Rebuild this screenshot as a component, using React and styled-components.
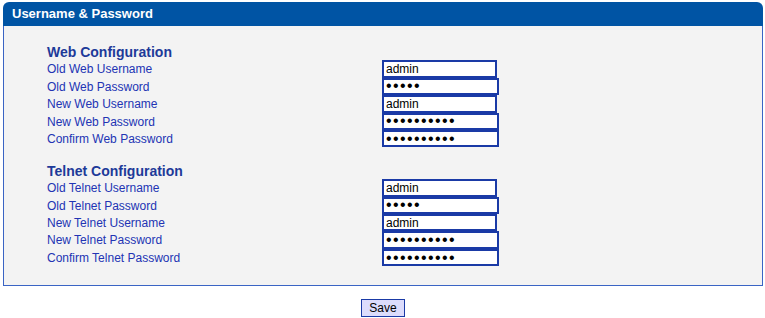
import React from 'react';
import styled, { createGlobalStyle } from 'styled-components';

const GlobalStyle = createGlobalStyle`
    body {
        margin: 0;
        background: #fff;
        font-family: "Liberation Sans", Arial, sans-serif;
    }
`;

const Page = styled.div`
    padding: 2px 2px 0 3px;
    width: 760px;
`;

const Header = styled.div`
    height: 24px;
    background: #0054a4;
    border-radius: 6px 6px 0 0;
    color: #fff;
    font-weight: bold;
    font-size: 13px;
    line-height: 24px;
    padding-left: 9px;
`;

const Panel = styled.div`
    background: #f3f3f3;
    border: 1px solid #3a64c4;
    border-top: 0;
    padding: 17px 0 19px 43px;
    height: 223px;
    box-sizing: content-box;
`;

const Section = styled.div`
    display: grid;
    grid-template-columns: 335px auto;
    grid-auto-rows: 17.4px;
    margin-bottom: ${props => (props.last ? '0' : '14.5px')};
`;

const Heading = styled.div`
    grid-column: 1 / 3;
    height: 18px;
    line-height: 18px;
    font-size: 14px;
    font-weight: bold;
    color: #1d3a99;
`;

const Label = styled.div`
    font-size: 12px;
    line-height: 17.4px;
    padding-top: 1px;
    color: #2234b4;
    white-space: nowrap;
`;

const Field = styled.input`
    box-sizing: border-box;
    width: ${props => (props.type === 'password' ? '117px' : '115px')};
    height: 17.4px;
    margin: 0;
    padding: 0 0 0 2px;
    border: 2px solid #1a3aa6;
    background: #fff;
    font-family: "Liberation Sans", Arial, sans-serif;
    font-size: ${props => (props.type === 'password' ? '16px' : '12px')};
    letter-spacing: ${props => (props.type === 'password' ? '1.4px' : '0')};
    color: #000;
    outline: none;
`;

const Footer = styled.div`
    display: flex;
    justify-content: center;
    padding-top: 13px;
`;

const SaveButton = styled.button`
    width: 44px;
    height: 18px;
    padding: 0;
    background: #dcdcfc;
    border: 1px solid #1a3aa6;
    font-family: "Liberation Sans", Arial, sans-serif;
    font-size: 12px;
    color: #000;
`;

const sections = [
    {
        title: 'Web Configuration',
        rows: [
            ['Old Web Username', 'text', 'admin'],
            ['Old Web Password', 'password', '12345'],
            ['New Web Username', 'text', 'admin'],
            ['New Web Password', 'password', '1234567890'],
            ['Confirm Web Password', 'password', '1234567890'],
        ],
    },
    {
        title: 'Telnet Configuration',
        rows: [
            ['Old Telnet Username', 'text', 'admin'],
            ['Old Telnet Password', 'password', '12345'],
            ['New Telnet Username', 'text', 'admin'],
            ['New Telnet Password', 'password', '1234567890'],
            ['Confirm Telnet Password', 'password', '1234567890'],
        ],
    },
];

export default function App() {
    return (
        <Page>
            <GlobalStyle />
            <Header>Username &amp; Password</Header>
            <Panel>
                {sections.map((section, i) => (
                    <Section key={section.title} last={i === sections.length - 1}>
                        <Heading>{section.title}</Heading>
                        {section.rows.map(([label, type, value]) => (
                            <React.Fragment key={label}>
                                <Label>{label}</Label>
                                <Field type={type} defaultValue={value} />
                            </React.Fragment>
                        ))}
                    </Section>
                ))}
            </Panel>
            <Footer>
                <SaveButton>Save</SaveButton>
            </Footer>
        </Page>
    );
}
